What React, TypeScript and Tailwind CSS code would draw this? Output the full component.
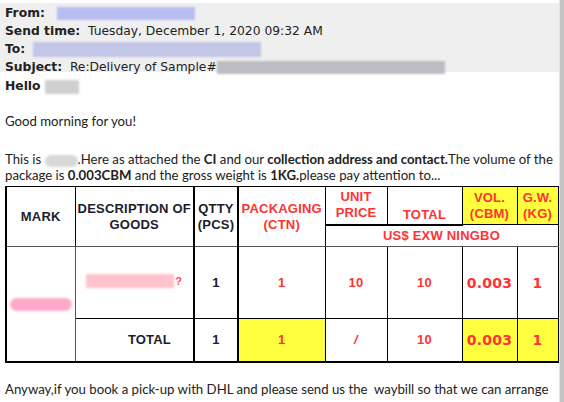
import React from 'react';

const headFont = { fontFamily: '"DejaVu Sans", Verdana, sans-serif' };
const bodyFont = { fontFamily: 'Lato, "Liberation Sans", sans-serif' };
const cellFont = { fontFamily: '"Liberation Sans", Arial, sans-serif' };
const numFont = { fontFamily: '"DejaVu Sans", Verdana, sans-serif' };

const Blur: React.FC<{ className: string }> = ({ className }) => (
  <span className={`inline-block align-middle blur-[1px] ${className}`} />
);

export default function App() {
  const red = 'text-[#ff3333]';
  const dark = 'text-[#1d1d2b]';
  const td = 'border border-black p-0 text-center';

  return (
    <div className="flex h-[402px] w-[564px] overflow-hidden bg-white">
      <div className="w-[559px] shrink-0">
        {/* message header */}
        <div className="mt-[3px] h-[69px] bg-[#efefef] pl-[5px] text-[12.3px] leading-[18px] text-[#222]" style={headFont}>
          <div className="pt-[1px]">
            <b>From:</b>
            <Blur className="ml-[12px] h-[13px] w-[138px] bg-[#b7bdf0]" />
          </div>
          <div>
            <b>Send time:</b>&nbsp; Tuesday, December 1, 2020 09:32 AM
          </div>
          <div>
            <b>To:</b>
            <Blur className="ml-[8px] h-[15px] w-[228px] bg-[#c3c6e6]" />
          </div>
          <div className="whitespace-nowrap">
            <b>Subject:</b>&nbsp; Re:Delivery of Sample#
            <Blur className="h-[13px] w-[228px] bg-[#bdbcc0]" />
          </div>
        </div>
        <div className="pl-[5px] text-[12.3px] leading-[18px] text-[#222]" style={headFont}>
          <div className="mt-[5px]">
            <b>Hello</b>
            <Blur className="ml-[4px] h-[14px] w-[34px] bg-[#d0d0d0]" />
          </div>
        </div>

        {/* body */}
        <div className="pl-[5px] text-[13.2px] leading-[16px] text-[#222]" style={bodyFont}>
          <div className="mt-[18px]">Good morning for you!</div>
          <div className="mt-[22px] whitespace-nowrap">
            This is <Blur className="h-[12px] w-[33px] rounded-md bg-[#d8d8d8]" />.Here as attached the <b>CI</b> and our{' '}
            <b>collection address and contact.</b>The volume of the
          </div>
          <div className="whitespace-nowrap">
            package is <b>0.003CBM</b> and the gross weight is <b>1KG.</b>please pay attention to...
          </div>
        </div>

        <table className="mt-[3px] ml-[5px] table-fixed border-collapse border-b-2 border-black" style={cellFont}>
          <colgroup>
            <col className="w-[69px]" />
            <col className="w-[119px]" />
            <col className="w-[44px]" />
            <col className="w-[87px]" />
            <col className="w-[62px]" />
            <col className="w-[75px]" />
            <col className="w-[55px]" />
            <col className="w-[41px]" />
          </colgroup>
          <tbody className="text-[13px] font-bold leading-[16px] tracking-[0.2px]">
            <tr className="h-[38px]">
              <td rowSpan={2} className={`${td} border-l-2 border-b-[#555] ${dark}`}>MARK</td>
              <td rowSpan={2} className={`${td} border-b-[#555] border-l-[#555] whitespace-nowrap ${dark}`}>
                DESCRIPTION OF<br />GOODS
              </td>
              <td rowSpan={2} className={`${td} border-l-2 border-b-[#555] ${dark}`}>QTTY<br />(PCS)</td>
              <td rowSpan={2} className={`${td} border-l-2 border-b-[#555] ${red}`}>PACKAGING<br />(CTN)</td>
              <td className={`${td} border-b-2 ${red}`}>UNIT<br />PRICE</td>
              <td className={`${td} border-b-2 align-bottom pb-[1px] ${red}`}>TOTAL</td>
              <td className={`${td} bg-[#ffff3f] ${red}`}>VOL.<br />(CBM)</td>
              <td className={`${td} bg-[#ffff3f] ${red}`}>G.W.<br />(KG)</td>
            </tr>
            <tr className="h-[22px]">
              <td colSpan={4} className={`${td} border-b-[#555] ${red}`}>US$ EXW NINGBO</td>
            </tr>
            <tr className="h-[72px]">
              <td rowSpan={2} className={`${td} border-l-2 border-l-black border-r-[#555]`}>
                <Blur className="h-[13px] w-[62px] rounded-full bg-[#ffaacb]" />
              </td>
              <td className={`${td} border-l-[#555]`}>
                <span className="inline-flex items-center">
                  <Blur className="h-[14px] w-[88px] bg-[#ffc4cb]" />
                  <span className="ml-[1px] text-[11px] text-[#ff4466]">?</span>
                </span>
              </td>
              <td className={`${td} border-l-2 ${dark}`}>1</td>
              <td className={`${td} border-l-2 ${red}`}>1</td>
              <td className={`${td} ${red}`}>10</td>
              <td className={`${td} ${red}`}>10</td>
              <td className={`${td} text-[14px] ${red}`} style={numFont}>0.003</td>
              <td className={`${td} text-[14px] ${red}`} style={numFont}>1</td>
            </tr>
            <tr className="h-[43px]">
              <td className={`${td} border-l-[#555] pr-[22px] text-right ${dark}`}>TOTAL</td>
              <td className={`${td} border-l-2 ${dark}`}>1</td>
              <td className={`${td} border-l-2 bg-[#ffff3f] ${red}`}>1</td>
              <td className={`${td} italic ${red}`}>/</td>
              <td className={`${td} ${red}`}>10</td>
              <td className={`${td} bg-[#ffff3f] text-[14px] ${red}`} style={numFont}>0.003</td>
              <td className={`${td} bg-[#ffff3f] text-[14px] ${red}`} style={numFont}>1</td>
            </tr>
          </tbody>
        </table>

        <div className="mt-[18px] whitespace-nowrap pl-[5px] text-[13.2px] leading-[16px] text-[#222]" style={bodyFont}>
          Anyway,if you book a pick-up with DHL and please send us the&nbsp; waybill so that we can arrange
        </div>
      </div>
      <div className="w-[5px] shrink-0 border-l border-[#e4e4e4] bg-[#c4c4c4]" />
    </div>
  );
}
